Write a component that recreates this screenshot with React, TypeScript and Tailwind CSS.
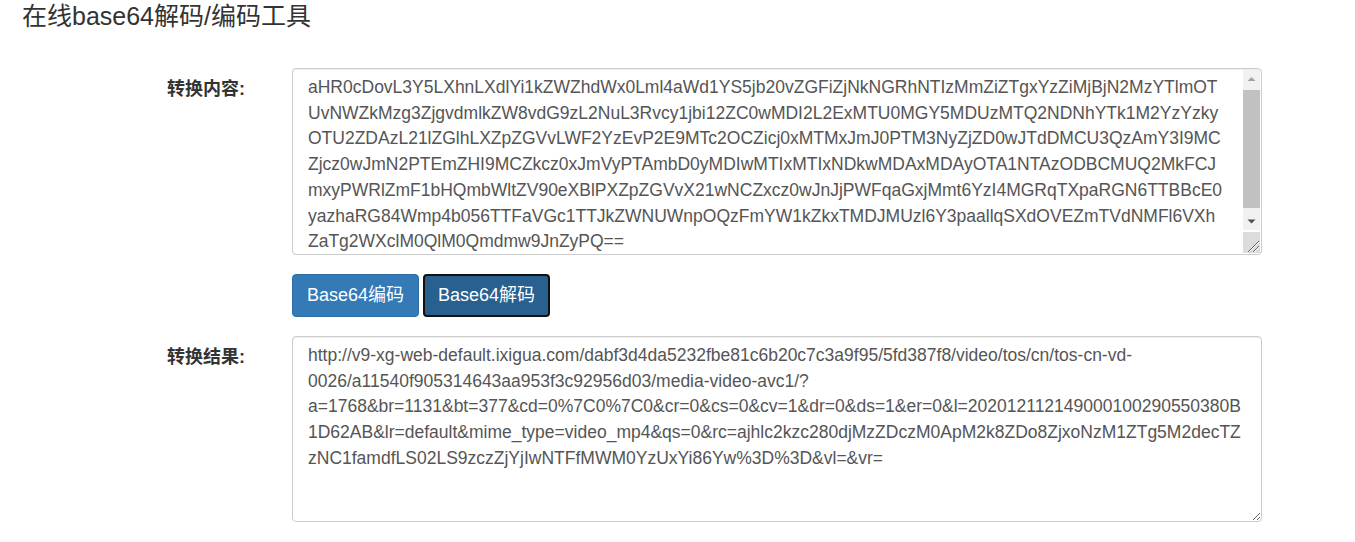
import React from 'react';

// line breaks kept where the original page wraps them
const encoded = [
  'aHR0cDovL3Y5LXhnLXdlYi1kZWZhdWx0Lml4aWd1YS5jb20vZGFiZjNkNGRhNTIzMmZiZTgxYzZiMjBjN2MzYTlmOT',
  'UvNWZkMzg3ZjgvdmlkZW8vdG9zL2NuL3Rvcy1jbi12ZC0wMDI2L2ExMTU0MGY5MDUzMTQ2NDNhYTk1M2YzYzky',
  'OTU2ZDAzL21lZGlhLXZpZGVvLWF2YzEvP2E9MTc2OCZicj0xMTMxJmJ0PTM3NyZjZD0wJTdDMCU3QzAmY3I9MC',
  'Zjcz0wJmN2PTEmZHI9MCZkcz0xJmVyPTAmbD0yMDIwMTIxMTIxNDkwMDAxMDAyOTA1NTAzODBCMUQ2MkFCJ',
  'mxyPWRlZmF1bHQmbWltZV90eXBlPXZpZGVvX21wNCZxcz0wJnJjPWFqaGxjMmt6YzI4MGRqTXpaRGN6TTBBcE0',
  'yazhaRG84Wmp4b056TTFaVGc1TTJkZWNUWnpOQzFmYW1kZkxTMDJMUzl6Y3paallqSXdOVEZmTVdNMFl6VXh',
  'ZaTg2WXclM0QlM0Qmdmw9JnZyPQ==',
].join('\n');

const decoded = [
  'http://v9-xg-web-default.ixigua.com/dabf3d4da5232fbe81c6b20c7c3a9f95/5fd387f8/video/tos/cn/tos-cn-vd-',
  '0026/a11540f905314643aa953f3c92956d03/media-video-avc1/?',
  'a=1768&br=1131&bt=377&cd=0%7C0%7C0&cr=0&cs=0&cv=1&dr=0&ds=1&er=0&l=202012112149000100290550380B',
  '1D62AB&lr=default&mime_type=video_mp4&qs=0&rc=ajhlc2kzc280djMzZDczM0ApM2k8ZDo8ZjxoNzM1ZTg5M2decTZ',
  'zNC1famdfLS02LS9zczZjYjIwNTFfMWM0YzUxYi86Yw%3D%3D&vl=&vr=',
].join('\n');

const font = "font-['Liberation_Sans','Noto_Sans_CJK_SC',sans-serif]";

function ScrollBar() {
  return (
    <>
      <div className="pointer-events-none absolute right-[2px] top-[2px] flex h-[160px] w-[17px] flex-col bg-[#f1f1f1]">
        <svg width="17" height="17" viewBox="0 0 17 17">
          <path d="M4.5 11 L8.5 7 L12.5 11 Z" fill="#a3a3a3" />
        </svg>
        <div className="flex-1 pt-[3px]">
          <div className="h-[118px] bg-[#c1c1c1]" />
        </div>
        <svg width="17" height="17" viewBox="0 0 17 17">
          <path d="M4.5 6.5 L8.5 10.5 L12.5 6.5 Z" fill="#505050" />
        </svg>
      </div>
      <div className="pointer-events-none absolute right-[2px] bottom-[2px] h-[21px] w-[17px] bg-[#dcdcdc]">
        <svg width="17" height="21" viewBox="0 0 17 21">
          <path d="M5 20 L16 9 M10 20 L16 14" stroke="#666" strokeWidth="1" />
          <path d="M6 20 L16 10 M11 20 L16 15" stroke="#fff" strokeWidth="1" />
        </svg>
      </div>
    </>
  );
}

export default function App() {
  return (
    <div className={`min-h-[542px] bg-white text-[#333] ${font}`}>
      <h3 className="pl-[22px] text-[25px] leading-[33px] font-normal">在线base64解码/编码工具</h3>

      <div className="mt-[35px] flex items-start">
        <label className="w-[245px] pt-[8px] text-right text-[18px] leading-[26px] font-bold">转换内容:</label>
        <div className="relative ml-[47px]">
          <textarea
            readOnly
            defaultValue={encoded}
            className="block h-[187px] w-[970px] overflow-hidden rounded border border-[#ccc] pl-[15px] pr-[34px] py-[6px] text-[17.5px] leading-[25.7px] text-[#555] shadow-[inset_0_1px_1px_rgba(0,0,0,0.075)] outline-none"
          />
          <ScrollBar />
        </div>
      </div>

      <div className="mt-[19px] ml-[292px] flex gap-[4px]">
        <button className="h-[43px] w-[127px] rounded border border-[#2e6da4] bg-[#337ab7] text-[18px] text-white">
          Base64编码
        </button>
        <button className="h-[43px] w-[127px] rounded border-2 border-[#111] bg-[#286090] text-[18px] text-white">
          Base64解码
        </button>
      </div>

      <div className="mt-[19px] flex items-start">
        <label className="w-[245px] pt-[8px] text-right text-[18px] leading-[26px] font-bold">转换结果:</label>
        <textarea
          readOnly
          defaultValue={decoded}
          className="ml-[47px] block h-[186px] w-[970px] rounded border border-[#ccc] px-[15px] py-[6px] text-[17.5px] leading-[25.7px] text-[#555] shadow-[inset_0_1px_1px_rgba(0,0,0,0.075)] outline-none"
        />
      </div>
    </div>
  );
}
